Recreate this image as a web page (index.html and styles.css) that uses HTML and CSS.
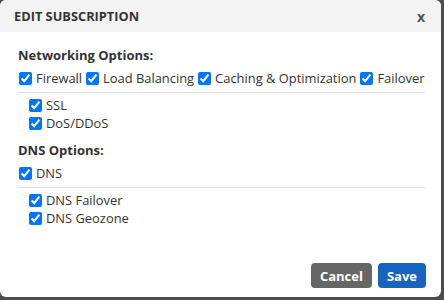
FILE: index.html
```html
<!DOCTYPE html>
<html lang="en">
<head>
  <meta charset="UTF-8">
  <title>Edit Subscription</title>
  <link rel="stylesheet" href="styles.css">
</head>
<body>
  <div class="modal">
    <div class="modal-header">
      <h2>EDIT SUBSCRIPTION</h2>
      <span class="close">x</span>
    </div>
    <div class="modal-body">
      <div class="group">
        <h3>Networking Options:</h3>
        <div class="options">
          <label><input type="checkbox" checked>Firewall</label>
          <label><input type="checkbox" checked>Load Balancing</label>
          <label><input type="checkbox" checked>Caching &amp; Optimization</label>
          <label><input type="checkbox" checked>Failover</label>
        </div>
        <div class="sub-options">
          <label><input type="checkbox" checked>SSL</label>
          <label><input type="checkbox" checked>DoS/DDoS</label>
        </div>
      </div>
      <div class="group">
        <h3>DNS Options:</h3>
        <div class="options">
          <label><input type="checkbox" checked>DNS</label>
        </div>
        <div class="sub-options">
          <label><input type="checkbox" checked>DNS Failover</label>
          <label><input type="checkbox" checked>DNS Geozone</label>
        </div>
      </div>
    </div>
    <div class="modal-footer">
      <button class="btn cancel">Cancel</button>
      <button class="btn save">Save</button>
    </div>
  </div>
</body>
</html>
```

FILE: styles.css
```css
:root {
  --text: #333;
  --header-bg: #f3f3f3;
  --border: #ddd;
  --blue: #1565c0;
  --grey: #666;
}

body {
  margin: 0;
  background: #4d4d4d;
  font-family: "Open Sans", sans-serif;
  color: var(--text);
}

.modal {
  width: 441px;
  height: 297px;
  background: #fff;
  border-radius: 6px;
  overflow: hidden;
  display: flex;
  flex-direction: column;
}

.modal-header {
  height: 32px;
  background: var(--header-bg);
  padding: 0 16px 0 14px;
  display: flex;
  align-items: center;
  justify-content: space-between;
}

.modal-header h2 {
  margin: 0;
  font-size: 12.8px;
  font-weight: bold;
}

.close {
  font-weight: bold;
  font-size: 14px;
  color: #555;
}

.modal-body {
  padding: 14px 16px 0 18px;
}

.group {
  margin-bottom: 9px;
}

.group h3 {
  margin: 0 0 5px;
  font-size: 13px;
  font-weight: bold;
  line-height: 18px;
}

.options {
  display: flex;
  column-gap: 3px;
  padding-bottom: 5px;
  border-bottom: 1px solid var(--border);
  white-space: nowrap;
}

.sub-options {
  display: flex;
  flex-direction: column;
  padding: 3px 0 0 10px;
}

label {
  display: flex;
  align-items: center;
  font-size: 12.9px;
  line-height: 18px;
}

label input {
  flex: none;
  margin: 0 4px 0 1px;
  width: 13px;
  height: 13px;
  accent-color: #0075ff;
}

.modal-footer {
  margin-top: auto;
  display: flex;
  justify-content: flex-end;
  gap: 6px;
  padding: 0 15px 9px;
}

.btn {
  height: 25px;
  padding: 0 9px;
  border: none;
  border-radius: 4px;
  color: #fff;
  font-family: "Open Sans", sans-serif;
  font-size: 13px;
  font-weight: bold;
}

.cancel {
  background: var(--grey);
}

.save {
  background: var(--blue);
}
```
